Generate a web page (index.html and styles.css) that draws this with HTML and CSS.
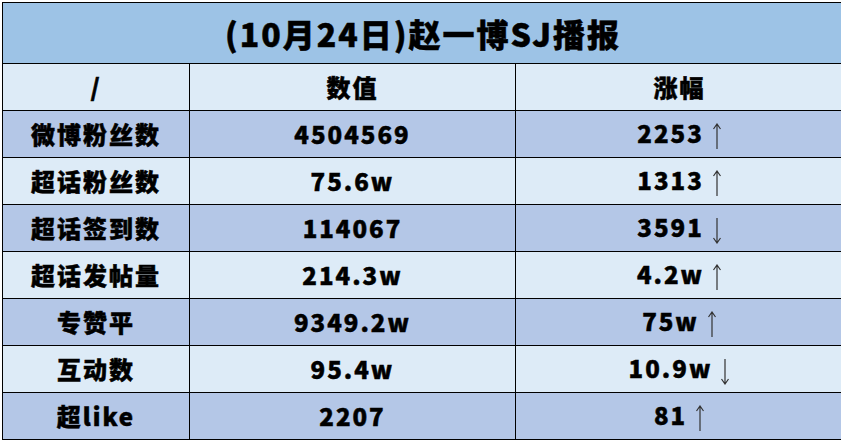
FILE: index.html
```html
<!DOCTYPE html>
<html lang="zh">
<head>
<meta charset="utf-8">
<title>赵一博SJ播报</title>
<link rel="stylesheet" href="styles.css">
</head>
<body>
<table class="report">
  <colgroup>
    <col class="c1"><col class="c2"><col class="c3">
  </colgroup>
  <tr class="title-row"><td colspan="3">(10月24日)赵一博SJ播报</td></tr>
  <tr class="head-row"><td>/</td><td>数值</td><td>涨幅</td></tr>
  <tr class="dark"><td>微博粉丝数</td><td>4504569</td><td>2253<svg class="arrow" viewBox="0 0 10 26"><path d="M5 1V26M1.5 6L5 1L8.5 6"/></svg></td></tr>
  <tr class="light"><td>超话粉丝数</td><td>75.6w</td><td>1313<svg class="arrow" viewBox="0 0 10 26"><path d="M5 1V26M1.5 6L5 1L8.5 6"/></svg></td></tr>
  <tr class="dark"><td>超话签到数</td><td>114067</td><td>3591<svg class="arrow down" viewBox="0 0 10 26"><path d="M5 0V25M1.5 20L5 25L8.5 20"/></svg></td></tr>
  <tr class="light"><td>超话发帖量</td><td>214.3w</td><td>4.2w<svg class="arrow" viewBox="0 0 10 26"><path d="M5 1V26M1.5 6L5 1L8.5 6"/></svg></td></tr>
  <tr class="dark"><td>专赞平</td><td>9349.2w</td><td>75w<svg class="arrow" viewBox="0 0 10 26"><path d="M5 1V26M1.5 6L5 1L8.5 6"/></svg></td></tr>
  <tr class="light"><td>互动数</td><td>95.4w</td><td>10.9w<svg class="arrow down" viewBox="0 0 10 26"><path d="M5 0V25M1.5 20L5 25L8.5 20"/></svg></td></tr>
  <tr class="dark"><td>超like</td><td>2207</td><td>81<svg class="arrow" viewBox="0 0 10 26"><path d="M5 1V26M1.5 6L5 1L8.5 6"/></svg></td></tr>
</table>
</body>
</html>
```
FILE: styles.css
```css
html, body {
  margin: 0;
  padding: 0;
  background: #ffffff;
}
body {
  padding: 2px 0 0 2px;
}
.report {
  border-collapse: collapse;
  width: 841px;
  table-layout: fixed;
  font-family: "Noto Sans CJK SC", "Noto Sans", sans-serif;
  font-weight: 900;
  color: #000;
}
.c1 { width: 187px; }
.c2 { width: 326px; }
.c3 { width: 328px; }
.report td {
  border: 1px solid #000;
  text-align: center;
  vertical-align: middle;
  padding: 0;
  height: 46px;
  font-size: 24px;
  line-height: 28px;
  letter-spacing: 2px;
  white-space: nowrap;
  -webkit-text-stroke: 0.5px #000;
}
.title-row td {
  background: #9dc3e6;
  height: 60px;
  font-size: 32px;
  letter-spacing: 2px;
}
.head-row td { background: #ddebf7; }
.dark td { background: #b4c7e7; }
.light td { background: #ddebf7; }
.arrow {
  width: 10px;
  height: 26px;
  margin-left: 8px;
  vertical-align: -6px;
  fill: none;
  stroke: #333;
  stroke-width: 1.2;
}
.arrow.down { vertical-align: -7px; }
```
